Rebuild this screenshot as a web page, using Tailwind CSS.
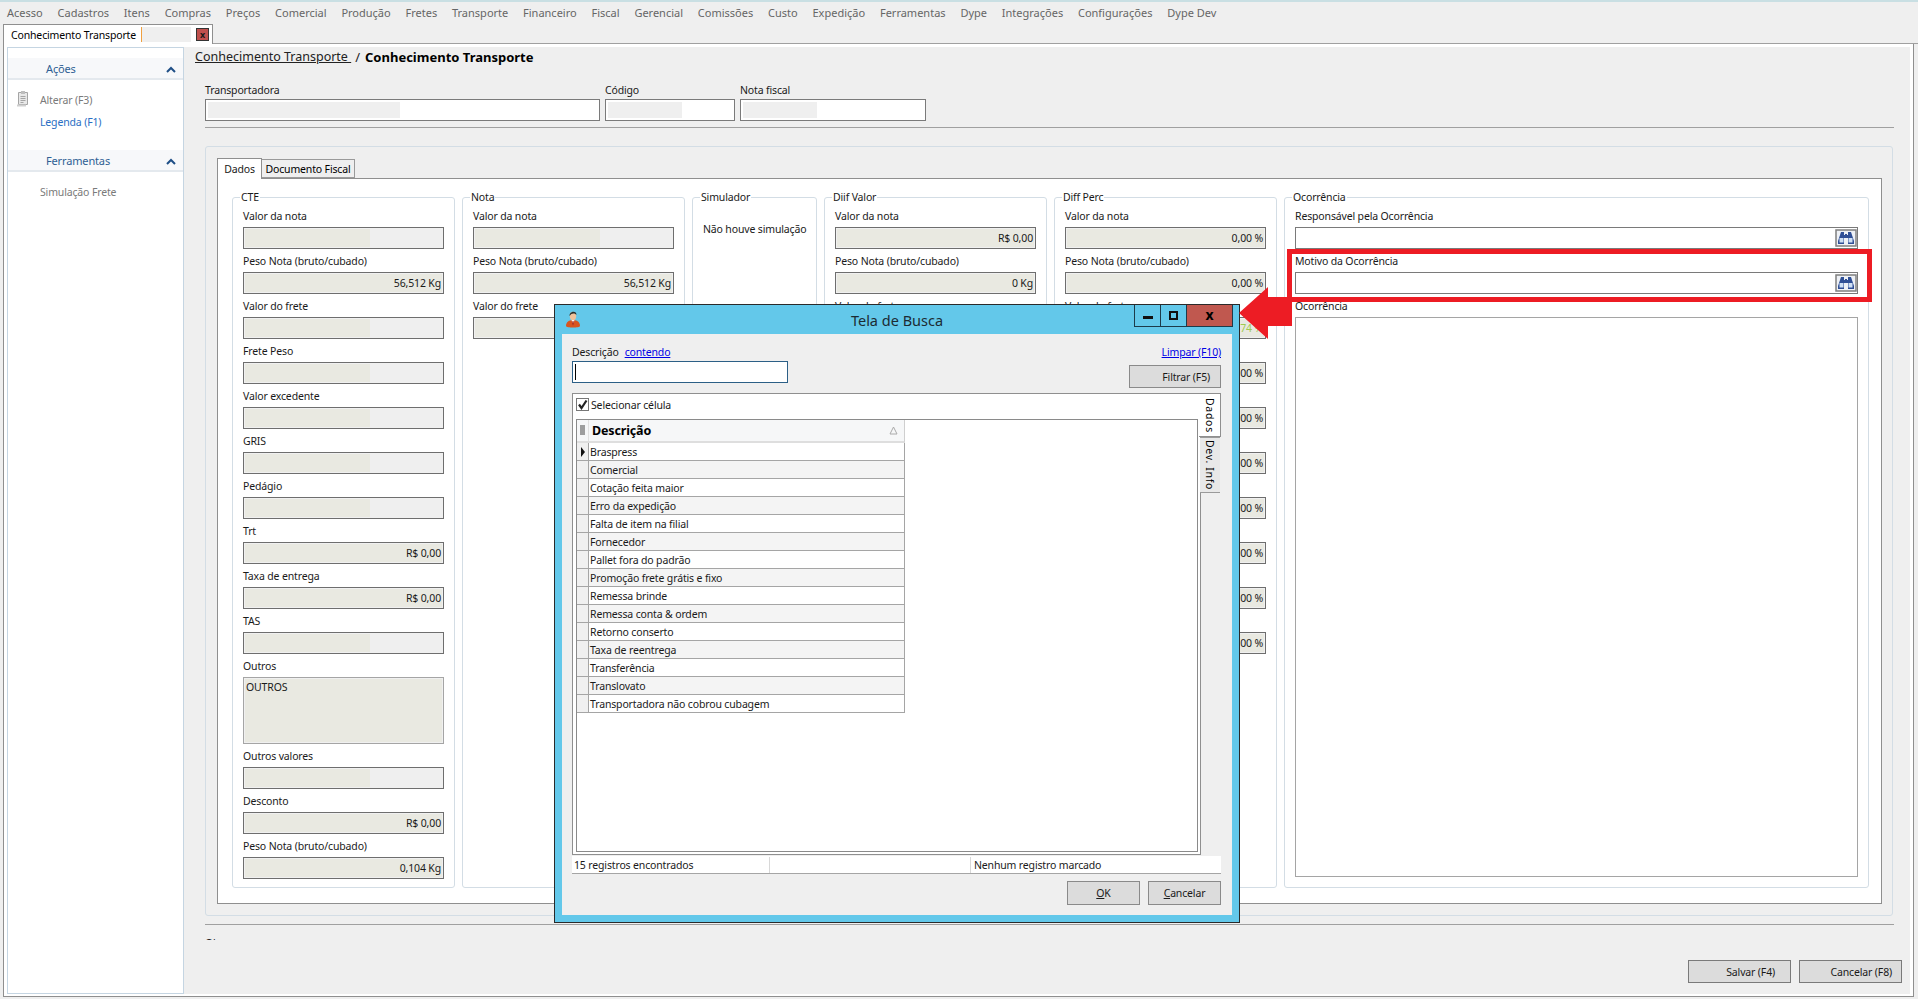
<!DOCTYPE html>
<html lang="pt-BR">
<head>
    <meta charset="UTF-8">
    <title>Conhecimento Transporte</title>
    <script src="https://cdn.jsdelivr.net/npm/@tailwindcss/browser@4"></script>
</head>
<body class="w-[1918px] h-[999px] relative overflow-hidden bg-[#efefef] text-[10.5px] tracking-[-0.15px] leading-[14px] text-[#1a1a1a] font-['Noto_Sans',sans-serif]">
    <div class="h-[2px] bg-[#c9dfe3]"></div>

    <!-- menu -->
    <div class="h-[22px] flex items-center pl-[7px] gap-[14.8px] text-[11px] tracking-normal text-[#666]">
        <span>Acesso</span><span>Cadastros</span><span>Itens</span><span>Compras</span><span>Preços</span><span>Comercial</span><span>Produção</span><span>Fretes</span><span>Transporte</span><span>Financeiro</span><span>Fiscal</span><span>Gerencial</span><span>Comissões</span><span>Custo</span><span>Expedição</span><span>Ferramentas</span><span>Dype</span><span>Integrações</span><span>Configurações</span><span>Dype Dev</span>
    </div>

    <!-- aba aberta -->
    <div class="h-[20px] flex items-end pl-[3px]">
        <div class="w-[210px] h-[20px] bg-white border border-b-0 border-[#8f8f8f] flex items-center pl-[7px] relative">
            <span class="text-black">Conhecimento Transporte</span>
            <span class="ml-[5px] w-[50px] h-[15px] bg-[#efefef] border-l border-[#f0a040]"></span>
            <span class="absolute left-[192px] top-[3px] w-[13px] h-[13px] bg-[#c0504d] border border-[#333] flex items-center justify-center text-[9px] font-bold leading-none">x</span>
        </div>
        <div class="flex-1 border-b border-[#a0a0a0]"></div>
    </div>

    <div class="ml-[3px] w-[1911px] h-[953px] bg-white border-x border-b border-[#8f8f8f] flex pt-[3px] pl-[3px] pr-[3px] pb-[2px]">
        <!-- menu lateral -->
        <div class="w-[177px] h-full border border-[#c5d5e2] bg-white pt-[10px] shrink-0">
            <div class="h-[22px] bg-[#f7f8fa] border-b-2 border-[#e4e9ee] flex items-center justify-between pl-[38px] pr-[7px] pt-[2px] text-[#2f5f94] text-[11px]">
                <span>Ações</span>
                <svg width="10" height="7" viewBox="0 0 10 7"><path d="M1 6 L5 2 L9 6" fill="none" stroke="#1f4f86" stroke-width="2"/></svg>
            </div>
            <div class="h-[70px] relative pl-[32px] pt-[9px]">
                <svg class="absolute left-[8px] top-[10px]" width="14" height="17" viewBox="0 0 14 17"><path d="M2.5 2.5h9v12h-9z" fill="#e8e8e8" stroke="#a5a5a5"/><path d="M5 1h4v3H5z" fill="#bdbdbd"/><path d="M4.5 6.5h5M4.5 8.5h5M4.5 10.5h5M4.5 12.5h3" stroke="#a5a5a5"/><path d="M1 15.5h9" stroke="#cfcfcf" stroke-width="2"/></svg>
                <div class="text-[#7a7a7a] h-[22px] flex items-center">Alterar (F3)</div>
                <div class="text-[#2a6fc4] h-[22px] flex items-center">Legenda (F1)</div>
            </div>
            <div class="h-[22px] bg-[#f7f8fa] border-b-2 border-[#e4e9ee] flex items-center justify-between pl-[38px] pr-[7px] pt-[2px] text-[#2f5f94] text-[11px]">
                <span>Ferramentas</span>
                <svg width="10" height="7" viewBox="0 0 10 7"><path d="M1 6 L5 2 L9 6" fill="none" stroke="#1f4f86" stroke-width="2"/></svg>
            </div>
            <div class="pl-[32px] pt-[13px] text-[#7a7a7a]">Simulação Frete</div>
        </div>

        <!-- conteudo -->
        <div class="flex-1 bg-[#efefef] pl-[21px] relative">
            <div class="h-[18px] mt-[1px] flex items-center -ml-[10px] tracking-normal text-[#222]">
                <span class="underline text-[12.5px]">Conhecimento Transporte&nbsp;</span>
                <span class="ml-[4px] text-[13px]">/</span>
                <span class="ml-[5px] font-bold text-[13px] text-black">Conhecimento Transporte</span>
            </div>

            <div class="flex gap-[5px] mt-[14px]">
                <div class="w-[395px]">
                    <div class="h-[19px] flex items-center">Transportadora</div>
                    <div class="h-[22px] bg-white border border-[#7a7a7a] p-[2px]"><div class="w-[192px] h-full bg-[#efefef]"></div></div>
                </div>
                <div class="w-[130px]">
                    <div class="h-[19px] flex items-center">Código</div>
                    <div class="h-[22px] bg-white border border-[#7a7a7a] p-[2px]"><div class="w-[74px] h-full bg-[#efefef]"></div></div>
                </div>
                <div class="w-[186px]">
                    <div class="h-[19px] flex items-center">Nota fiscal</div>
                    <div class="h-[22px] bg-white border border-[#7a7a7a] p-[2px]"><div class="w-[74px] h-full bg-[#efefef]"></div></div>
                </div>
            </div>
            <div class="w-[1689px] border-t border-[#a0a0a0] mt-[6px]"></div>

            <!-- painel das abas -->
            <div class="w-[1688px] h-[770px] mt-[18px] border border-[#d3dde5] rounded-[3px] pl-[11px] pt-[10px] pr-[10px]">
                <div class="flex items-end h-[21px]">
                    <div class="w-[45px] h-[21px] bg-white border border-b-0 border-[#8f8f8f] flex items-center justify-center relative top-[1px] z-10">Dados</div>
                    <div class="w-[93px] h-[19px] bg-[#efefef] border border-l-0 border-[#9a9a9a] flex items-center justify-center text-black">Documento Fiscal</div>
                </div>
                <div class="w-[1665px] h-[726px] bg-white border border-[#8f8f8f] pl-[14px] pt-[18px] flex">
                    <div id="cte" class="w-[223px] h-[691px] border border-[#d3dde5] rounded-[3px] relative pt-[6px] px-[10px] shrink-0">
                        <span class="absolute -top-[8px] left-[7px] bg-white px-[1px]">CTE</span>
                    </div>
                    <div id="nota" class="w-[223px] h-[691px] ml-[7px] border border-[#d3dde5] rounded-[3px] relative pt-[6px] px-[10px] shrink-0">
                        <span class="absolute -top-[8px] left-[7px] bg-white px-[1px]">Nota</span>
                    </div>
                    <div class="w-[125px] h-[691px] ml-[7px] border border-[#d3dde5] rounded-[3px] relative pt-[24px] pl-[10px] shrink-0">
                        <span class="absolute -top-[8px] left-[7px] bg-white px-[1px]">Simulador</span>
                        Não houve simulação
                    </div>
                    <div id="diifValor" class="w-[223px] h-[691px] ml-[7px] border border-[#d3dde5] rounded-[3px] relative pt-[6px] px-[10px] shrink-0">
                        <span class="absolute -top-[8px] left-[7px] bg-white px-[1px]">Diif Valor</span>
                    </div>
                    <div id="diffPerc" class="w-[223px] h-[691px] ml-[7px] border border-[#d3dde5] rounded-[3px] relative pt-[6px] px-[10px] shrink-0">
                        <span class="absolute -top-[8px] left-[7px] bg-white px-[1px]">Diff Perc</span>
                    </div>
                    <div class="w-[585px] h-[691px] ml-[7px] border border-[#d3dde5] rounded-[3px] relative pt-[6px] px-[10px] shrink-0">
                        <span class="absolute -top-[8px] left-[7px] bg-white px-[1px]">Ocorrência</span>
                        <div class="h-[23px] flex items-center">Responsável pela Ocorrência</div>
                        <div class="h-[22px] bg-white border border-[#7a7a7a] flex items-center justify-end">
                            <svg width="22" height="18" viewBox="0 0 22 18"><rect x="1" y="1" width="20" height="16" fill="#eef1f6" stroke="#7f7f7f" stroke-width="1.5"/><path d="M6 3h3v3h1v-1h2v1h1V3h3l3 9v3h-6V9h-4v6H3v-3z" fill="#2f4f96"/><rect x="4.5" y="9" width="4" height="4.5" fill="#cfe0f5"/><rect x="13.5" y="9" width="4" height="4.5" fill="#cfe0f5"/></svg>
                        </div>
                        <div class="h-[23px] flex items-center">Motivo da Ocorrência</div>
                        <div class="h-[22px] bg-white border border-[#7a7a7a] flex items-center justify-end">
                            <svg width="22" height="18" viewBox="0 0 22 18"><rect x="1" y="1" width="20" height="16" fill="#eef1f6" stroke="#7f7f7f" stroke-width="1.5"/><path d="M6 3h3v3h1v-1h2v1h1V3h3l3 9v3h-6V9h-4v6H3v-3z" fill="#2f4f96"/><rect x="4.5" y="9" width="4" height="4.5" fill="#cfe0f5"/><rect x="13.5" y="9" width="4" height="4.5" fill="#cfe0f5"/></svg>
                        </div>
                        <div class="h-[23px] flex items-center">Ocorrência</div>
                        <div class="h-[560px] bg-white border border-[#a5a5a5]"></div>
                    </div>
                </div>
            </div>

            <div class="w-[1689px] border-t border-[#a0a0a0] mt-[8px]"></div>
            <div class="h-[4px] mt-[11px] overflow-hidden leading-[14px]">Obs</div>

            <div class="absolute right-[8px] bottom-[11px] flex gap-[8px]">
                <div class="w-[103px] h-[23px] bg-[#dcdcdc] border border-[#7a7a7a] flex items-center justify-end pr-[15px]">Salvar (F4)</div>
                <div class="w-[103px] h-[23px] bg-[#dcdcdc] border border-[#7a7a7a] flex items-center justify-end pr-[9px]">Cancelar (F8)</div>
            </div>
        </div>
    </div>

    <!-- destaque vermelho -->
    <div class="absolute left-[1287px] top-[249px] w-[585px] h-[53px] border-[5px] border-[#ed1c24]"></div>

    <!-- Tela de Busca -->
    <div class="absolute left-[554px] top-[304px] w-[686px] h-[619px] bg-[#63c8ea] border border-[#2a2a2a] px-[7px]">
        <div class="h-[29px] flex items-center justify-center relative text-[14.5px] tracking-normal text-[#1c2b33]">
            <svg class="absolute left-[3px] top-[5px]" width="16" height="18" viewBox="0 0 16 18"><path d="M1 16c0-4 3-6 7-6s7 2 7 6c0 2-14 2-14 0z" fill="#d9551f"/><path d="M6.5 10h3L8 15z" fill="#fff"/><path d="M7.5 11h1l.5 3-1 1.5-1-1.5z" fill="#b02a1a"/><ellipse cx="8" cy="6" rx="3.2" ry="4.2" fill="#eec29c"/><path d="M4.6 6C4 1 12 0 11.4 5c-1-2-5-2.5-6.8 1z" fill="#26302f"/></svg>
            <span>Tela de Busca</span>
            <div class="absolute -right-[1px] top-0 h-[22px] flex text-black">
                <div class="w-[27px] border border-t-0 border-[#1d3b4a] flex items-end justify-center pb-[7px]"><div class="w-[10px] h-[3px] bg-[#111]"></div></div>
                <div class="w-[26px] border-b border-r border-[#1d3b4a] flex items-center justify-center"><div class="w-[9px] h-[9px] border-2 border-[#111]"></div></div>
                <div class="w-[46px] bg-[#c0584f] border-b border-r border-[#1d3b4a] flex items-center justify-center text-[14px] font-bold leading-none pb-[2px]">x</div>
            </div>
        </div>
        <div class="h-[581px] bg-[#efefef] pl-[10px] pr-[11px]">
            <div class="h-[59px] pt-[11px] flex justify-between">
                <div>
                    <div class="h-[14px] flex gap-[6px]"><span>Descrição</span><a class="text-[#0000e6] underline">contendo</a></div>
                    <div class="w-[216px] h-[22px] mt-[2px] bg-white border border-[#2c5f86] flex items-center pl-[2px]"><div class="w-[1px] h-[16px] bg-black"></div></div>
                </div>
                <div class="flex flex-col items-end">
                    <a class="h-[14px] text-[#0000e6] underline">Limpar (F10)</a>
                    <div class="w-[92px] h-[23px] mt-[6px] bg-[#dcdcdc] border border-[#8a8a8a] flex items-center justify-end pr-[10px]">Filtrar (F5)</div>
                </div>
            </div>

            <div class="flex h-[463px] items-start">
                <div class="w-[629px] h-[462px] bg-white border border-[#8f8f8f] pl-[3px] pt-[4px]">
                    <div class="h-[21px] flex items-start gap-[2px]">
                        <div class="w-[13px] h-[13px] bg-white border border-[#777] flex items-center justify-center">
                            <svg width="11" height="11" viewBox="0 0 11 11"><path d="M2 5.5 L4.5 9 L9.5 1.5" fill="none" stroke="#222" stroke-width="2.2"/></svg>
                        </div>
                        <span>Selecionar célula</span>
                    </div>
                    <div class="w-[622px] h-[433px] border border-[#8a8a8a]">
                        <div class="w-[328px] h-[23px] bg-[#f6f7f8] border-b-2 border-[#dedede] border-r border-r-[#cfcfcf] flex items-center relative">
                            <div class="w-[12px] h-full border-r border-[#e0e0e0] flex items-center justify-center">
                                <svg width="7" height="11" viewBox="0 0 7 11"><path d="M1 1h5M1 3h5M1 5h5M1 7h5M1 9h5" stroke="#444"/></svg>
                            </div>
                            <span class="ml-[3px] text-[12.5px] font-bold text-black">Descrição</span>
                            <svg class="absolute right-[6px] top-[6px]" width="9" height="9" viewBox="0 0 9 9"><path d="M4.5 1 L8 8 H1 Z" fill="none" stroke="#aaa"/></svg>
                        </div>
                        <div id="rows"></div>
                    </div>
                </div>
                <div class="w-[20px]">
                    <div class="w-[22px] h-[44px] bg-white border-t border-r border-b border-[#8f8f8f] -ml-[2px] flex items-center justify-center text-black [writing-mode:vertical-rl] tracking-[0.7px]">Dados</div>
                    <div class="w-[20px] h-[56px] -ml-[1px] bg-[#e8e8e8] border-x border-b border-[#9a9a9a] flex items-center justify-center text-black [writing-mode:vertical-rl] tracking-[0.7px]">Dev. Info</div>
                </div>
            </div>

            <div class="w-[649px] h-[18px] bg-white border-b border-[#a5a5a5] flex pt-[1px]">
                <div class="w-[198px] h-full border-r border-[#d8d8d8] pl-[2px] flex items-center">15 registros encontrados</div>
                <div class="w-[201px] h-full border-r border-[#d8d8d8]"></div>
                <div class="pl-[3px] flex items-center">Nenhum registro marcado</div>
            </div>
            <div class="flex justify-end gap-[8px] mt-[7px]">
                <div class="w-[73px] h-[24px] bg-[#dcdcdc] border border-[#8a8a8a] flex items-center justify-center"><span><u>O</u>K</span></div>
                <div class="w-[73px] h-[24px] bg-[#dcdcdc] border border-[#8a8a8a] flex items-center justify-center"><span><u>C</u>ancelar</span></div>
            </div>
        </div>
    </div>

    <!-- seta vermelha -->
    <svg class="absolute left-[1239px] top-[286px]" width="54" height="54" viewBox="0 0 54 54"><path d="M0 27 L29 1 V11 H53 V40 H29 V53 Z" fill="#ed1c24"/></svg>

    <script>
        const empty = `<div class="h-full border border-[#f0f0f0] bg-[#efefef]"><div class="w-[125px] h-full bg-[#e9e9e1]"></div></div>`;

        function valueBox(value, color) {
            return `<div class="h-full border border-[#f0f0f0] bg-[#e9e9e1] flex items-center justify-end pr-[1px] ${color}">${value}</div>`;
        }

        function field(label, value, color) {
            return `<div class="h-[23px] flex items-center">${label}</div>
                <div class="h-[22px] bg-white border border-[#6e6e6e]">${value ? valueBox(value, color || "") : empty}</div>`;
        }

        let cte = [
            ["Valor da nota"], ["Peso Nota (bruto/cubado)", "56,512 Kg"], ["Valor do frete"], ["Frete Peso"],
            ["Valor excedente"], ["GRIS"], ["Pedágio"], ["Trt", "R$ 0,00"], ["Taxa de entrega", "R$ 0,00"], ["TAS"]
        ];
        let html = cte.map(f => field(f[0], f[1])).join("");
        html += `<div class="h-[23px] flex items-center">Outros</div>
            <div class="h-[67px] bg-[#e9e9e1] border border-[#a5a5a5] pl-[2px] pt-[2px] outline outline-[#f0f0f0] -outline-offset-2">OUTROS</div>`;
        html += field("Outros valores") + field("Desconto", "R$ 0,00") + field("Peso Nota (bruto/cubado)", "0,104 Kg");
        document.getElementById("cte").insertAdjacentHTML("beforeend", html);

        document.getElementById("nota").insertAdjacentHTML("beforeend",
            field("Valor da nota") + field("Peso Nota (bruto/cubado)", "56,512 Kg") + field("Valor do frete"));

        let labels = ["Valor da nota", "Peso Nota (bruto/cubado)", "Valor do frete", "Frete Peso", "Valor excedente", "GRIS", "Pedágio", "Trt", "Taxa de entrega", "TAS"];
        let diif = ["R$ 0,00", "0 Kg", "R$ 0,00", "R$ 0,00", "R$ 0,00", "R$ 0,00", "R$ 0,00", "R$ 0,00", "R$ 0,00", "R$ 0,00"];
        document.getElementById("diifValor").insertAdjacentHTML("beforeend", labels.map((l, i) => field(l, diif[i])).join(""));
        document.getElementById("diffPerc").insertAdjacentHTML("beforeend",
            labels.map((l, i) => i == 2 ? field(l, "74 %", "text-[#9ecb4e]") : field(l, "0,00 %")).join(""));

        let motivos = ["Braspress", "Comercial", "Cotação feita maior", "Erro da expedição", "Falta de item na filial", "Fornecedor", "Pallet fora do padrão", "Promoção frete grátis e fixo", "Remessa brinde", "Remessa conta & ordem", "Retorno conserto", "Taxa de reentrega", "Transferência", "Translovato", "Transportadora não cobrou cubagem"];
        document.getElementById("rows").innerHTML = motivos.map((m, i) => `
            <div class="w-[328px] h-[18px] flex border-b border-r border-[#a5a5a5] ${i % 2 ? "bg-[#f4f4f4]" : "bg-white"}">
                <div class="w-[12px] h-full bg-[#f0f0f0] border-r border-[#a5a5a5] flex items-center justify-center">
                    ${i == 0 ? '<svg width="6" height="10" viewBox="0 0 6 10"><path d="M1 0 L5 5 L1 10 Z" fill="#111"/></svg>' : ""}
                </div>
                <span class="ml-[1px] flex items-center">${m.replace("&", "&amp;")}</span>
            </div>`).join("");
    </script>
</body>
</html>
